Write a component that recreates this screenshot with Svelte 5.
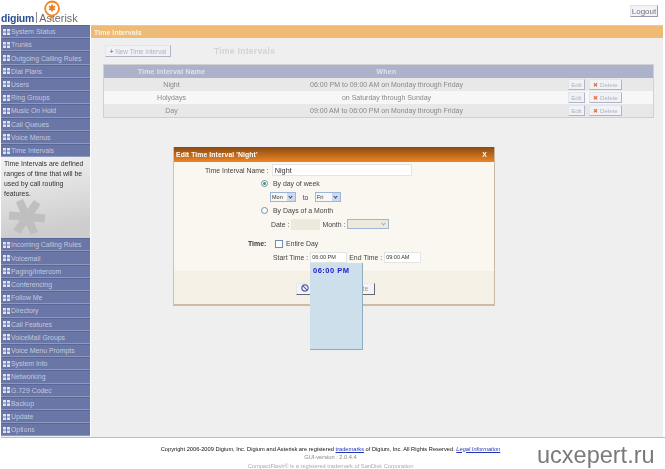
<script>
  const before = ['System Status','Trunks','Outgoing Calling Rules','Dial Plans','Users','Ring Groups','Music On Hold','Call Queues','Voice Menus','Time Intervals'];
  const after = ['Incoming Calling Rules','Voicemail','Paging/Intercom','Conferencing','Follow Me','Directory','Call Features','VoiceMail Groups','Voice Menu Prompts','System Info','Networking','G.729 Codec','Backup','Update','Options'];
  const rows = [
    { name: 'Night', when: '06:00 PM to 09:00 AM on Monday through Friday' },
    { name: 'Holydays', when: 'on Saturday through Sunday' },
    { name: 'Day', when: '09:00 AM to 06:00 PM on Monday through Friday' }
  ];
</script>

{#snippet navItem(label)}
  <div class="nav-item">
    <svg class="grid-icon" width="7" height="6" viewBox="0 0 7 6"><path d="M0 0h3v2.500H0zM4 0h3v2.500H4zM0 3.500h3V6H0zM4 3.500h3V6H4z" fill="#dfe3f0"/></svg>
    <span>{label}</span>
  </div>
{/snippet}

<div class="page">
  <header class="top soft">
    <div class="logo">
      <span class="digium">digium</span><span class="sep"></span><span class="asterisk">Asterisk</span>
      <svg class="bubble" width="18" height="19" viewBox="0 0 18 19">
        <path d="M9 1.500a7 7 0 0 1 6.500 9.500c-1 2.500-3.500 4-6 4.500l-1.500 2.500-.5-2.700A7 7 0 0 1 9 1.500z" fill="none" stroke="#ee8a2c" stroke-width="1.800"/>
        <path d="M9 4.500v7M6 6.200l6 3.600M12 6.200l-6 3.600" stroke="#ee7a1c" stroke-width="1.800"/>
      </svg>
    </div>
    <button class="logout">Logout</button>
  </header>

  <div class="middle soft">
    <nav class="sidebar">
      {#each before as b}{@render navItem(b)}{/each}
      <div class="info">
        Time Intervals are defined ranges of time that will be used by call routing features.
        <svg class="big-star" width="44" height="44" viewBox="0 0 44 44">
          <g stroke="#bfbfbf" stroke-width="8" transform="rotate(5 22 22)">
            <path d="M4 22h36M13 6.400l18 31.200M31 6.400l-18 31.200"/>
          </g>
        </svg>
      </div>
      {#each after as a}{@render navItem(a)}{/each}
    </nav>

    <main class="main">
      <div class="titlebar">
        <span>Time Intervals</span>
        <svg width="7" height="7" viewBox="0 0 7 7"><path d="M1 3.500a2.500 2.500 0 0 1 4.500-1.500M6 3.500a2.500 2.500 0 0 1-4.500 1.500" fill="none" stroke="#dcc58f" stroke-width="1"/></svg>
      </div>
      <div class="toolbar">
        <button class="btn new"><span class="plus">+</span> New Time Interval</button>
        <span class="heading">Time Intervals</span>
      </div>
      <div class="table">
        <div class="tr th">
          <div class="c-name">Time Interval Name</div>
          <div class="c-when">When</div>
          <div class="c-act"></div>
        </div>
        {#each rows as r, i}
          <div class="tr" class:alt={i === 1}>
            <div class="c-name">{r.name}</div>
            <div class="c-when">{r.when}</div>
            <div class="c-act">
              <button class="btn mini">Edit</button>
              <button class="btn mini del"><span class="x">✖</span> Delete</button>
            </div>
          </div>
        {/each}
      </div>
    </main>
  </div>

  <footer class="footer soft">
    <div class="copy">Copyright 2006-2009 Digium, Inc. Digium and Asterisk are registered <a href="#t">trademarks</a> of Digium, Inc. All Rights Reserved. <a href="#l"><i>Legal Information</i></a></div>
    <div class="ver">GUI-version : 2.0.4.4</div>
    <div class="cf">CompactFlash® is a registered trademark of SanDisk Corporation</div>
  </footer>

  <section class="dialog soft">
    <div class="d-head"><span>Edit Time Interval 'Night'</span><span class="d-x">X</span></div>
    <div class="d-body">
      <div class="f name-row">
        <span class="lbl">Time Interval Name :</span>
        <span class="input wide">Night</span>
      </div>
      <div class="f opt"><span class="radio on"></span><span>By day of week</span></div>
      <div class="f sub">
        <span class="select s1">Mon<span class="arr"></span></span>
        <span class="to">to</span>
        <span class="select s2">Fri<span class="arr"></span></span>
      </div>
      <div class="f opt"><span class="radio"></span><span>By Days of a Month</span></div>
      <div class="f sub date-row">
        <span>Date :</span>
        <span class="date"></span>
        <span>Month :</span>
        <span class="select s3 off"><span class="arr"></span></span>
      </div>
      <div class="f time-row">
        <b class="lbl">Time:</b>
        <span class="check"></span><span>Entire Day</span>
      </div>
      <div class="f times">
        <span>Start Time :</span>
        <span class="input t">06:00 PM</span>
        <span>End Time :</span>
        <span class="input t">09:00 AM</span>
      </div>
    </div>
    <div class="d-foot">
      <button class="btn dlg"><svg width="8" height="8" viewBox="0 0 8 8"><circle cx="4" cy="4" r="3.200" fill="none" stroke="#5566aa" stroke-width="1.200"/><path d="M1.800 1.800l4.400 4.400" stroke="#5566aa" stroke-width="1.200"/></svg> Cancel</button>
      <button class="btn dlg upd">✓ Update</button>
    </div>
  </section>

  <div class="timepop soft">06:00 PM</div>
  <div class="wm">ucxepert.ru</div>
</div>

<style>
  :global(body) { margin: 0; background: #fff; font-family: "Liberation Sans", Arial, sans-serif; }
  .page { position: relative; width: 665px; height: 469px; overflow: hidden; font-size: 7px; color: #555; }
  .soft { filter: blur(0.25px); }
  button { font-family: inherit; padding: 0; margin: 0; }

  .top { height: 25px; display: flex; justify-content: space-between; align-items: flex-start; }
  .logo { position: relative; display: flex; align-items: center; height: 25px; padding: 10px 0 0 1px; box-sizing: border-box; }
  .digium { font-size: 10.500px; font-weight: bold; color: #2d4f94; letter-spacing: -0.200px; line-height: 14px; }
  .sep { width: 1px; height: 11px; background: #8b8b8b; margin: 0 2px; }
  .asterisk { font-size: 10.800px; color: #6a6a6a; line-height: 14px; }
  .bubble { position: absolute; left: 43px; top: 0; }
  .logout { margin: 5px 7px 0 0; width: 28px; height: 12px; font-size: 8px; color: #777; background: #f2f3f8; border: 1px solid; border-color: #dfe2ee #99a #99a #dfe2ee; line-height: 9px; }

  .middle { display: flex; height: 412px; padding-left: 1px; }
  .sidebar { width: 89px; flex: none; background: #e7ebf3; display: flex; flex-direction: column; }
  .nav-item { height: 13.220px; box-sizing: border-box; flex: none; background: #6976a6; border-bottom: 1px solid #8e99c0; border-top: 1px solid #59669a; display: flex; align-items: center; gap: 1px; padding-left: 2px; color: #c3c9df; font-size: 6.900px; white-space: nowrap; }
  .grid-icon { flex: none; }
  .info { position: relative; height: 81px; flex: none; box-sizing: border-box; padding: 2px 3px; font-size: 6.900px; line-height: 9.800px; color: #333; background: linear-gradient(170deg, #f3f3f3, #cdcdcd 85%); overflow: hidden; }
  .big-star { position: absolute; left: 4px; top: 38px; }

  .main { flex: 1; margin-left: 1px; margin-right: 2px; background: #efefef; }
  .titlebar { height: 13px; background: #efbb74; border-top: 1px solid #c9cde0; box-sizing: border-box; display: flex; align-items: center; gap: 5px; padding-left: 3px; color: #fbf3e0; font-weight: bold; font-size: 6.900px; letter-spacing: 0.100px; }
  .toolbar { display: flex; align-items: flex-start; padding: 7px 0 0 14px; height: 12px; gap: 43px; }
  .btn { background: #f1f2f5; border: 1px solid; border-color: #e4e6ee #b0b4c8 #b0b4c8 #e4e6ee; color: #b0b3c0; font-size: 6.400px; }
  .new { width: 66px; height: 12px; line-height: 9px; white-space: nowrap; flex: none; }
  .plus { color: #6cad5a; font-weight: bold; }
  .heading { font-weight: bold; color: #d3d3d3; font-size: 8.500px; letter-spacing: 0.300px; line-height: 12px; }
  .table { margin: 7px 0 0 12px; width: 551px; border: 1px solid #d0d0d0; box-sizing: border-box; }
  .tr { display: flex; height: 13px; align-items: center; background: #e8e8e8; color: #888; }
  .tr.alt { background: #f7f7f7; }
  .th { background: #abb2c9; color: #dfe3ee; font-weight: bold; letter-spacing: 0.200px; }
  .c-name { width: 135px; text-align: center; flex: none; }
  .c-when { width: 295px; text-align: center; flex: none; }
  .c-act { flex: 1; display: flex; gap: 4px; padding-left: 34px; }
  .mini { height: 11px; line-height: 8px; width: 17px; font-size: 6.200px; white-space: nowrap; }
  .del { width: 33px; }
  .x { color: #e2714a; font-size: 6px; }

  .footer { border-top: 1px solid #aac3d2; text-align: center; font-size: 5.700px; padding: 6.500px 5px 0 0; margin-left: 1px; line-height: 8.500px; }
  .copy { color: #111; }
  .copy a { color: #2233bb; }
  .ver { color: #888; }
  .cf { color: #aaa; }

  .dialog { position: absolute; left: 173px; top: 147px; width: 322px; background: #faf7f0; border-right: 1px solid #c9b9a4; border-left: 1px solid #cfc2b0; border-bottom: 2px solid #cdbba6; box-sizing: border-box; color: #444; font-size: 6.900px; }
  .d-head { height: 15px; background: linear-gradient(#8a4a10, #ed8526); display: flex; align-items: center; justify-content: space-between; color: #fff; font-weight: bold; padding: 0 7px 0 2px; font-size: 6.800px; letter-spacing: 0.100px; }
  .d-body { height: 109px; box-sizing: border-box; }
  .f { display: flex; align-items: center; white-space: nowrap; box-sizing: border-box; }
  .name-row { height: 15px; padding: 1px 0 0 31px; gap: 3px; }
  .lbl { color: #444; }
  .input { background: #fff; border: 1px solid #e4e4e4; box-sizing: border-box; display: flex; align-items: center; color: #333; padding-left: 2px; }
  .wide { width: 140px; height: 12px; font-size: 7.300px; }
  .opt { height: 13px; padding-left: 87px; gap: 5px; }
  .radio { width: 5px; height: 5px; border-radius: 50%; border: 1px solid #6f8fb0; background: #fff; position: relative; flex: none; }
  .radio.on::after { content: ""; position: absolute; inset: 1px; border-radius: 50%; background: #3a9a5a; }
  .sub { height: 14px; padding-left: 96px; }
  .select { position: relative; box-sizing: border-box; height: 10px; background: #f7f7f7; border: 1px solid #9db5d8; font-size: 5.500px; display: flex; align-items: center; padding-left: 1px; color: #333; flex: none; }
  .s1, .s2 { width: 26px; }
  .s3 { width: 42px; background: #ece9dd; }
  .arr { position: absolute; right: 0; top: 0; bottom: 0; width: 8px; background: #ccd9f0; }
  .arr::after { content: ""; position: absolute; left: 2px; top: 2px; width: 2px; height: 2px; border: solid #345; border-width: 0 1px 1px 0; transform: rotate(45deg); }
  .off .arr { background: #ece9dd; }
  .off .arr::after { border-color: #aaa; }
  .to { width: 19px; text-align: center; flex: none; }
  .date-row { padding-left: 97px; }
  .date { width: 29px; height: 11px; background: #ece9dd; margin: 0 2px; flex: none; }
  .date-row .select { margin-left: 2px; }
  .time-row { height: 13px; margin-top: 6px; padding-left: 74px; }
  .time-row b { width: 27px; color: #333; flex: none; }
  .check { width: 6px; height: 6px; border: 1px solid #6f8fb0; background: #fff; margin-right: 3px; flex: none; }
  .times { height: 14px; padding-left: 99px; gap: 2px; }
  .t { width: 37px; height: 11px; font-size: 5.500px; padding-left: 1px; flex: none; }
  .d-foot { height: 33px; background: #f4f0e6; display: flex; padding: 12px 0 0 122px; box-sizing: border-box; }
  .dlg { height: 12px; width: 39px; background: #f4f4f8; border-color: #e8e8f0 #667 #667 #e8e8f0; color: #666; white-space: nowrap; line-height: 8px; }
  .upd { width: 40px; color: #b09080; border-left: none; }

  .timepop { position: absolute; left: 310px; top: 263px; width: 53px; height: 87px; box-sizing: border-box; background: #cddfeb; border-right: 1px solid #8eacc0; border-bottom: 1px solid #8eacc0; color: #2222cc; font-weight: bold; font-size: 7.500px; padding: 3px 0 0 3px; letter-spacing: 0.500px; }
  .wm { position: absolute; left: 537px; top: 442px; font-size: 23.500px; color: #7a7a7a; line-height: 26px; }
</style>
